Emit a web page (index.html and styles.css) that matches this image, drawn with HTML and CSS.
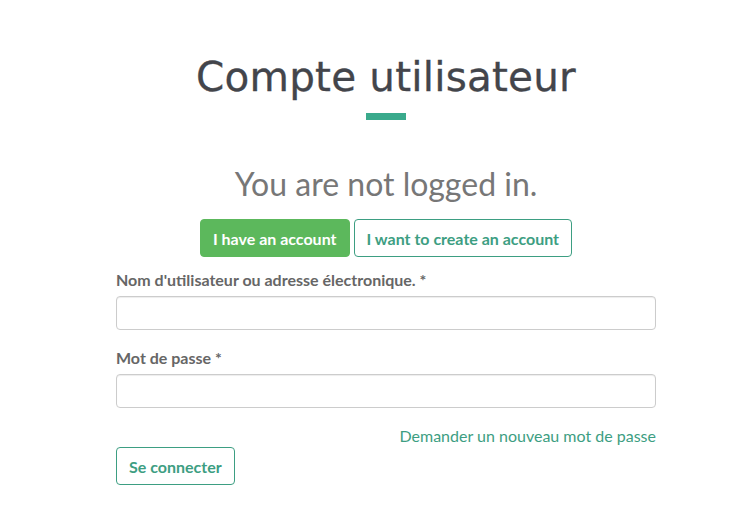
FILE: index.html
```html
<!DOCTYPE html>
<html lang="fr">
<head>
<meta charset="utf-8">
<title>Compte utilisateur</title>
<link rel="stylesheet" href="styles.css">
</head>
<body>
<main class="page">
  <header class="head">
    <h1 class="title">Compte utilisateur</h1>
    <div class="bar"></div>
  </header>
  <h2 class="status">You are not logged in.</h2>
  <div class="tabs">
    <a class="btn btn-green" href="#">I have an account</a>
    <a class="btn btn-outline" href="#">I want to create an account</a>
  </div>
  <form class="form">
    <label class="label" for="name">Nom d'utilisateur ou adresse électronique. *</label>
    <input class="input" id="name" type="text">
    <label class="label label2" for="pass">Mot de passe *</label>
    <input class="input" id="pass" type="password">
    <div class="forgot"><a href="#">Demander un nouveau mot de passe</a></div>
    <div><button class="btn btn-outline submit" type="button">Se connecter</button></div>
  </form>
</main>
</body>
</html>
```
FILE: styles.css
```css
* { box-sizing: border-box; }
body {
  margin: 0;
  background: #fff;
  font-family: Lato, "Open Sans", sans-serif;
  color: #666;
}
.page {
  width: 540px;
  margin-left: 116px;
  padding-top: 52px;
}
.head {
  display: flex;
  flex-direction: column;
  align-items: center;
}
.title {
  margin: 0;
  font-family: "DejaVu Sans", sans-serif;
  font-weight: normal;
  font-size: 40.5px;
  line-height: 50px;
  color: #43454b;
  letter-spacing: 0.2px;
  -webkit-text-stroke: 0.3px #43454b;
}
.bar {
  width: 40px;
  height: 7px;
  background: #3aaa8c;
  margin-top: 11px;
}
.status {
  margin: 44px 0 0;
  text-align: center;
  font-weight: normal;
  font-size: 32px;
  line-height: 40px;
  color: #777;
}
.tabs {
  display: flex;
  justify-content: center;
  gap: 4px;
  margin-top: 15px;
}
.btn {
  display: inline-flex;
  align-items: center;
  height: 38px;
  padding: 0 12px;
  font-family: Lato, sans-serif;
  font-weight: bold;
  font-size: 16px;
  border-radius: 4px;
  text-decoration: none;
  border: 1px solid transparent;
  background: #fff;
}
.btn-green {
  background: #5cb85c;
  border-color: #5cb85c;
  color: #fff;
}
.btn-outline {
  border-color: #3d9e82;
  color: #3d9e82;
}
.form {
  display: flex;
  flex-direction: column;
  margin-top: 12px;
}
.label {
  font-weight: bold;
  font-size: 16px;
  line-height: 22px;
  color: #666;
}
.label2 { margin-top: 17px; }
.input {
  margin-top: 5px;
  height: 34px;
  width: 100%;
  border: 1px solid #ccc;
  border-radius: 4px;
  box-shadow: inset 0 1px 1px rgba(0,0,0,0.075);
}
.forgot {
  margin-top: 18px;
  text-align: right;
  font-size: 16px;
  line-height: 20px;
}
.forgot a {
  color: #3d9e82;
  text-decoration: none;
}
.submit {
  margin-top: 1px;
  cursor: pointer;
}
```
